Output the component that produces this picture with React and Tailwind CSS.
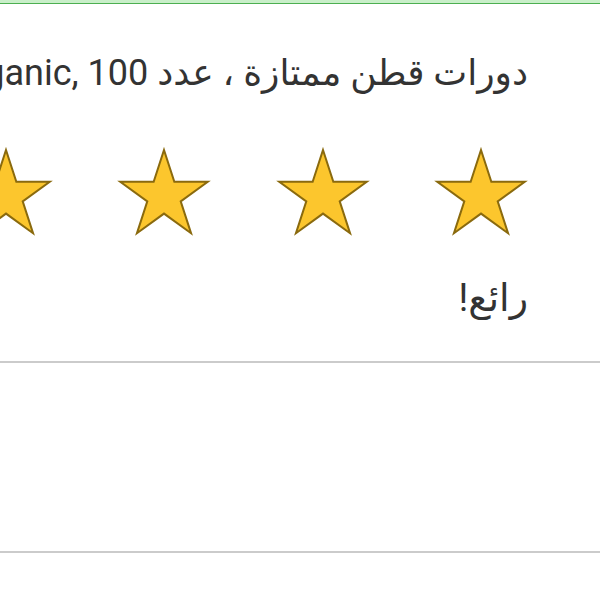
import React from 'react';

// five-point star used by the rating row
const Star = () => (
  <svg width="94" height="92" viewBox="0 0 94 92" className="shrink-0">
    <path
      d="M47 4 L57.33 35.79 L90.75 35.79 L63.71 55.43 L74.04 87.21 L47 67.57 L19.96 87.21 L30.29 55.43 L3.25 35.79 L36.67 35.79 Z"
      fill="#fcc62d"
      stroke="#8a6a0e"
      strokeWidth="2"
      strokeLinejoin="miter"
    />
  </svg>
);

export default function App() {
  const rating = 5;

  return (
    <div
      className="w-[600px] h-[600px] overflow-hidden bg-white text-[#333333]"
      style={{ fontFamily: 'Roboto, "DejaVu Sans", sans-serif' }}
    >
      <div className="h-[3px] bg-[#c9efc9]" />
      <div className="h-px bg-[#4caf50]" />

      <div dir="rtl" className="pr-[72px] pt-[45px]">
        <p className="text-[36px] leading-[48px] whitespace-nowrap">
          دورات قطن ممتازة ، عدد 100 ,Organic
        </p>

        <div className="flex gap-[64.5px] mt-[49px]">
          {Array.from({ length: rating }).map((_, i) => (
            <Star key={i} />
          ))}
        </div>

        <p className="text-[38px] leading-[48px] mt-[36px]">رائع!</p>
      </div>

      <div className="mt-[39px] h-[2px] bg-[#cbcbcb]" />
      <div className="h-[188px]" />
      <div className="h-[2px] bg-[#cbcbcb]" />
    </div>
  );
}
